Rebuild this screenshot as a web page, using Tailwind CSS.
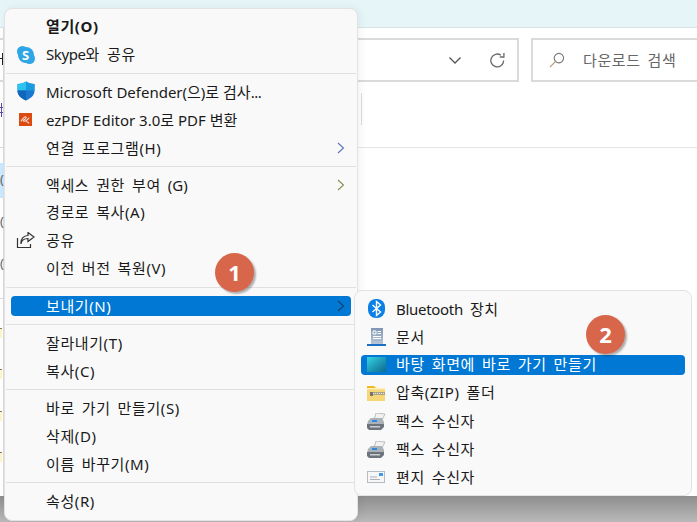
<!DOCTYPE html>
<html lang="ko">
  <head>
    <meta charset="UTF-8" />
    <title>보내기</title>
    <script src="https://cdn.jsdelivr.net/npm/@tailwindcss/browser@4"></script>
  </head>
  <body class="bg-white text-[#1a1a1a] text-[15px] overflow-hidden font-['Noto_Sans','Noto_Sans_CJK_KR',sans-serif]">
    <div class="relative w-[697px] h-[522px] overflow-hidden">
      <!-- Explorer window behind the menus -->
      <div class="h-[28px] bg-[#e6f5f7] border-b border-[#d8e2e3]"></div>
      <div class="flex h-[46px] mt-[10px] gap-[12px]">
        <div class="w-[519px] h-[44px] border-2 border-l-0 border-[#dadada] flex items-center justify-end gap-[27px] pr-[11px]">
          <svg width="14" height="14" viewBox="0 0 14 14" fill="none" stroke="#555" stroke-width="1.3"><path d="M1.500 4.500 7 10l5.500-5.500" /></svg>
          <svg width="17" height="17" viewBox="0 0 18 18" fill="none" stroke="#6b6b6b" stroke-width="1.400"><path d="M15.500 9A6.800 6.800 0 1 1 12.600 3.400" /><path d="M15.800 1v4.300h-4.400" /></svg>
        </div>
        <div class="flex-1 h-[44px] border-2 border-r-0 border-[#dadada] flex items-center pl-[16px] text-[#666]">
          <svg width="16" height="16" viewBox="0 0 17 17" fill="none" stroke-width="1.200"><circle cx="10.500" cy="6.500" r="5" stroke="#777" /><path d="M6.800 10.200 1 16" stroke="#b79a6a" /></svg>
          <span class="ml-[18px] tracking-[0.6px] [word-spacing:2.5px]">다운로드 검색</span>
        </div>
      </div>
      <div class="absolute left-[361px] top-[93px] w-px h-[32px] bg-[#dcdcdc]"></div>
      <div class="absolute left-[358px] right-0 top-[147px] h-px bg-[#e5e5e5]"></div>

      <!-- Left edge of the file list, mostly hidden by the menu -->
      <div class="absolute left-[3px] top-[28px] w-px h-[468px] bg-[#dcdcdc]"></div>
      <div class="absolute left-0 top-[163px] w-[4px] h-[35px] bg-[#cce8ff]"></div>
      <div class="absolute left-0 top-[38px] w-[4px] h-px bg-[#dcdcdc]"></div>
      <div class="absolute left-0 top-[81px] w-[4px] h-px bg-[#dcdcdc]"></div>
      <div class="absolute left-0 top-[147px] w-[4px] h-px bg-[#dcdcdc]"></div>
      <div class="absolute left-0 top-[298px] w-[4px] h-px bg-[#dcdcdc]"></div>
      <div class="absolute left-[2px] top-[53px] w-px h-[12px] bg-[#222]"></div>
      <div class="absolute left-0 top-[58px] w-[3px] h-px bg-[#222]"></div>
      <div class="absolute left-[1px] top-[103px] w-px h-[14px] bg-[#5a4bb0]"></div>
      <div class="absolute left-0 top-[107px] w-[3px] h-px bg-[#5a4bb0]"></div>
      <div class="absolute left-0 top-[112px] w-[3px] h-px bg-[#5a4bb0]"></div>
      <div class="absolute left-0 top-[170px] text-[#666] text-[13px]">(</div>
      <div class="absolute left-0 top-[212px] text-[#666] text-[13px]">(</div>
      <div class="absolute left-0 top-[254px] text-[#666] text-[13px]">(</div>
      <div class="absolute left-0 top-[328px] w-[2px] h-[10px] bg-[#fdf6c8] border-t border-[#8a7a60]"></div>
      <div class="absolute left-0 top-[369px] w-[2px] h-[10px] bg-[#fdf6c8] border-t border-[#8a7a60]"></div>
      <div class="absolute left-0 top-[411px] w-[2px] h-[10px] bg-[#fdf6c8] border-t border-[#8a7a60]"></div>
      <div class="absolute left-0 top-[452px] w-[2px] h-[10px] bg-[#fdf6c8] border-t border-[#8a7a60]"></div>

      <!-- Shadow strip at the bottom -->
      <div class="absolute left-0 right-0 top-[496px] bottom-0 bg-gradient-to-b from-[#8e8e8e] to-[#b9b9b9]"></div>

      <!-- Main context menu -->
      <div class="absolute left-[4px] top-[8px] w-[354px] h-[513px] bg-[#f9f9f9] border border-[#e2e2e2] rounded-[8px] pt-[4px] shadow-[2px_0_8px_rgba(0,0,0,0.06)] tracking-[0.6px] [word-spacing:2.5px]">
        <div class="h-[28px] flex items-center pl-[41px] pb-[2px] font-bold">열기(O)</div>
        <div class="h-[28px] flex items-center pl-[41px] pb-[2px] relative">
          <svg class="absolute left-[12px] top-[5px]" width="18" height="18" viewBox="0 0 18 18"><circle cx="5.500" cy="5.500" r="5.500" fill="#2ea6e6" /><circle cx="12.500" cy="12.500" r="5.500" fill="#2ea6e6" /><circle cx="9" cy="9" r="8" fill="#2ea6e6" /><text x="9" y="13.800" font-size="13" font-weight="700" text-anchor="middle" fill="#fff" font-family="Noto Sans">S</text></svg>
          <span><span class="tracking-[-0.4px] [word-spacing:0]">Skype</span>와 공유</span>
        </div>
        <div class="h-[9px] flex items-center"><div class="w-full mx-[1px] h-px bg-[#e0e0e0]"></div></div>
        <div class="h-[28px] flex items-center pl-[41px] relative">
          <svg class="absolute left-[12px] top-[3px]" width="18" height="20" viewBox="0 0 18 20"><path d="M9 .5C7 2 4 3 .5 3v7c0 4.500 4 7.500 8.500 9.500 4.500-2 8.500-5 8.500-9.500V3C14 3 11 2 9 .5Z" fill="#1b78d0" /><path d="M9 .5C7 2 4 3 .5 3v6.500H9Z" fill="#2cc3ee" /><path d="M9 .5V9.500h8.500V3C14 3 11 2 9 .5Z" fill="#1a9be0" /><path d="M9 9.500V19.500C4.500 17.500.5 14.500.5 9.500Z" fill="#1166bb" /></svg>
          <span class="tracking-normal [word-spacing:0]">Microsoft Defender(으)로 검사<span class="tracking-[-0.5px]">...</span></span>
        </div>
        <div class="h-[28px] flex items-center pl-[41px] relative">
          <svg class="absolute left-[14px] top-[7px]" width="13" height="13" viewBox="0 0 14 14"><rect width="14" height="14" fill="#dc4a12" /><path d="M2 9c2-3 4-5 5-5s1 2-1 3-2 2 0 2 3-2 5-4M8 9l3 2" fill="none" stroke="#fbe3d6" stroke-width="1.100" /></svg>
          <span class="tracking-normal [word-spacing:0]">ezPDF Editor 3.0로 PDF 변환</span>
        </div>
        <div class="h-[28px] flex items-center pl-[41px] relative">
          연결 프로그램(H)
          <svg class="absolute right-[12px] top-[8px]" width="8" height="12" viewBox="0 0 8 12" fill="none" stroke="#5a74b0" stroke-width="1.100"><path d="m1 1 5.500 5L1 11" /></svg>
        </div>
        <div class="h-[9px] flex items-center"><div class="w-full mx-[1px] h-px bg-[#e0e0e0]"></div></div>
        <div class="h-[28px] flex items-center pl-[41px] relative">
          <span>액세스 권한 부여 <span class="tracking-normal">(G)</span></span>
          <svg class="absolute right-[12px] top-[8px]" width="8" height="12" viewBox="0 0 8 12" fill="none" stroke="#8a8a50" stroke-width="1.100"><path d="m1 1 5.500 5L1 11" /></svg>
        </div>
        <div class="h-[28px] flex items-center pl-[41px] pb-[2px]">경로로 복사(A)</div>
        <div class="h-[28px] flex items-center pl-[41px] pb-[2px] relative">
          <svg class="absolute left-[11px] top-[5px]" width="19" height="17" viewBox="0 0 19 17" fill="none" stroke="#333" stroke-width="1.200"><path d="M1.500 6v9.500h13V12" /><path d="M5 12c.5-3.500 3-5.500 7-5.500V9.500l6-4.500-6-4.500v3C7.500 3.500 4.500 7 5 12Z" /></svg>
          공유
        </div>
        <div class="h-[28px] flex items-center pl-[41px] pb-[2px]">이전 버전 복원(V)</div>
        <div class="h-[9px] flex items-center"><div class="w-full mx-[1px] h-px bg-[#e0e0e0]"></div></div>
        <div class="h-[28px] flex items-center px-[6px]">
          <div class="relative w-full h-[20px] rounded-[4px] bg-[#0078d4] text-white flex items-center pl-[35px]">
            보내기(N)
            <svg class="absolute right-[6px] top-[4px]" width="8" height="12" viewBox="0 0 8 12" fill="none" stroke="#1c3f66" stroke-width="1.100"><path d="m1 1 5.500 5L1 11" /></svg>
          </div>
        </div>
        <div class="h-[9px] flex items-center"><div class="w-full mx-[1px] h-px bg-[#e0e0e0]"></div></div>
        <div class="h-[28px] flex items-center pl-[41px]">잘라내기(T)</div>
        <div class="h-[28px] flex items-center pl-[41px]">복사(C)</div>
        <div class="h-[9px] flex items-center"><div class="w-full mx-[1px] h-px bg-[#e0e0e0]"></div></div>
        <div class="h-[28px] flex items-center pl-[41px]">바로 가기 만들기(S)</div>
        <div class="h-[28px] flex items-center pl-[41px]">삭제(D)</div>
        <div class="h-[28px] flex items-center pl-[41px]">이름 바꾸기(M)</div>
        <div class="h-[9px] flex items-center"><div class="w-full mx-[1px] h-px bg-[#e0e0e0]"></div></div>
        <div class="h-[28px] flex items-center pl-[41px]">속성(R)</div>
      </div>

      <!-- Send to submenu -->
      <div class="absolute left-[354px] top-[290px] w-[338px] h-[206px] bg-[#f9f9f9] border border-[#e2e2e2] rounded-[8px] pt-[4px] tracking-[0.6px] [word-spacing:2.5px]">
        <div class="h-[28px] flex items-center pl-[41px] relative">
          <svg class="absolute left-[13px] top-[4px]" width="17" height="19" viewBox="0 0 17 19"><rect width="17" height="19" rx="8" fill="#0a7fe6" /><path d="m4.500 6 8 7-4 3.500V2.500l4 3.500-8 7" fill="none" stroke="#fff" stroke-width="1.400" /></svg>
          <span><span class="tracking-[-0.3px] [word-spacing:0]">Bluetooth</span> 장치</span>
        </div>
        <div class="h-[28px] flex items-center pl-[41px] relative">
          <svg class="absolute left-[12px] top-[5px]" width="19" height="19" viewBox="0 0 19 19"><defs><linearGradient id="doc" x1="0" y1="0" x2="0" y2="1"><stop offset="0" stop-color="#7d96b4" /><stop offset="1" stop-color="#b9c6d6" /></linearGradient></defs><rect x="4" y="0" width="12" height="16" fill="url(#doc)" /><path d="M6 3h3v3H6zM10.500 3.500h3.500M10.500 5.500h3.500M6 8.500h8M6 10.500h8" stroke="#fff" fill="none" /><rect x="0" y="16" width="19" height="2" fill="#1a6fc4" /></svg>
          문서
        </div>
        <div class="h-[28px] flex items-center px-[6px]">
          <div class="relative w-full h-[20px] rounded-[4px] bg-[#0078d4] text-white flex items-center pl-[35px] pb-[1px]">
            <div class="absolute left-[6px] top-[2px] w-[19px] h-[15px] bg-gradient-to-br from-[#35d6e8] via-[#1f9cb8] to-[#0d6a92]"></div>
            바탕 화면에 바로 가기 만들기
          </div>
        </div>
        <div class="h-[28px] flex items-center pl-[41px] pb-[2px] relative">
          <svg class="absolute left-[12px] top-[7px]" width="18" height="15" viewBox="0 0 18 15"><path d="M0 0h7l2 2H0z" fill="#f2b91c" /><rect y="2" width="18" height="13" fill="#f5d777" /><rect y="2" width="18" height="1.500" fill="#fbeeb8" /><rect x="3" y="6" width="15" height="3" fill="#a8a48e" /><path d="M4 7.500h14" stroke="#efe9c8" stroke-dasharray="1 1" /><rect x="3" y="6" width="3" height="4" fill="#77756a" /></svg>
          압축(ZIP) 폴더
        </div>
        <div class="h-[28px] flex items-center pl-[41px] relative">
          <svg class="absolute left-[11px] top-[6px]" width="20" height="17" viewBox="0 0 20 17"><path d="M10 0l9 1-3 6H8z" fill="#f2f2f2" stroke="#a8a8a8" stroke-width=".7" /><path d="M5 5h11l2 4v3L1 12l1-4z" fill="#aab2b9" /><path d="M1 11h17v3l-3 3H3l-2-2z" fill="#6d747b" /><rect x="6" y="7" width="5" height="2" fill="#2b8ae0" /><rect x="4" y="13" width="10" height="1.500" fill="#c9cdd1" /></svg>
          팩스 수신자
        </div>
        <div class="h-[28px] flex items-center pl-[41px] relative">
          <svg class="absolute left-[11px] top-[6px]" width="20" height="17" viewBox="0 0 20 17"><path d="M10 0l9 1-3 6H8z" fill="#f2f2f2" stroke="#a8a8a8" stroke-width=".7" /><path d="M5 5h11l2 4v3L1 12l1-4z" fill="#aab2b9" /><path d="M1 11h17v3l-3 3H3l-2-2z" fill="#6d747b" /><rect x="6" y="7" width="5" height="2" fill="#2b8ae0" /><rect x="4" y="13" width="10" height="1.500" fill="#c9cdd1" /></svg>
          팩스 수신자
        </div>
        <div class="h-[28px] flex items-center pl-[41px] relative">
          <svg class="absolute left-[12px] top-[8px]" width="18" height="12" viewBox="0 0 18 12"><rect x=".5" y=".5" width="17" height="11" fill="#f6f6f6" stroke="#b5bcc2" /><rect x="12" y="2" width="4" height="3" fill="#3d9ae8" /><path d="M3 6h7M3 8.500h10" stroke="#a9b0b6" /></svg>
          편지 수신자
        </div>
      </div>

      <!-- Step badges -->
      <div class="absolute left-[215px] top-[253px] w-[39px] h-[39px] rounded-full bg-[#d8664a] text-white text-[22px] font-bold flex items-center justify-center shadow-[2px_2px_2px_rgba(0,0,0,0.3)]">1</div>
      <div class="absolute left-[586px] top-[315px] w-[39px] h-[39px] rounded-full bg-[#d8664a] text-white text-[22px] font-bold flex items-center justify-center shadow-[2px_2px_2px_rgba(0,0,0,0.3)]">2</div>
    </div>
  </body>
</html>
